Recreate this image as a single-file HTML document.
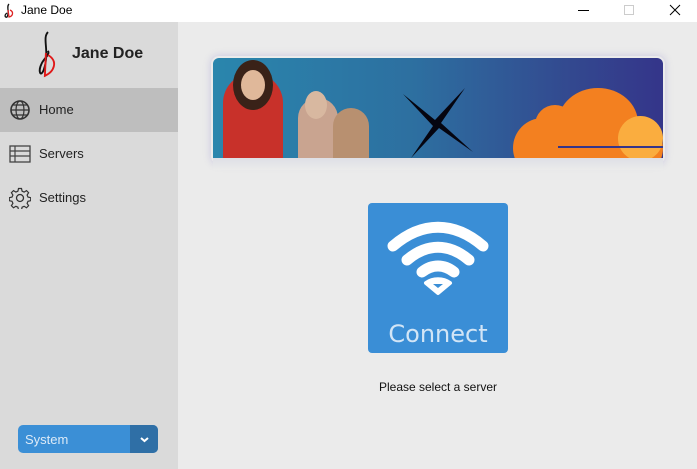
<!DOCTYPE html>
<html><head><style>
*{margin:0;padding:0;box-sizing:border-box}
body{width:697px;height:469px;overflow:hidden;background:#ebebeb;font-family:"Liberation Sans",sans-serif;position:relative}
.title{position:absolute;left:0;top:0;width:697px;height:22px;background:#fff;font-size:12px}
.side{position:absolute;left:0;top:22px;width:178px;height:447px;background:#dadada}
.item{position:absolute;left:0;width:178px;height:44px;font-size:13px;color:#222}
.item span{position:absolute;left:39px;top:14px}
.item svg{position:absolute;left:9px;top:11px}
</style></head><body>
<div class="title">
 <svg style="position:absolute;left:3px;top:3px" width="12" height="16" viewBox="0 0 12 16"><path d="M6 1 C3 4 7 9 4 14 C2 15 1 12 4 10" stroke="#111" fill="none" stroke-width="1.3"/><path d="M5 7 L6 14 C10 13 11 9 7 7" stroke="#d22" fill="none" stroke-width="1.3"/></svg>
 <span style="position:absolute;left:21px;top:3px;color:#000">Jane Doe</span>
 <div style="position:absolute;left:578px;top:10px;width:11px;height:1px;background:#000"></div>
 <div style="position:absolute;left:624px;top:5px;width:10px;height:10px;border:1px solid #ccc"></div>
 <svg style="position:absolute;left:669px;top:4px" width="12" height="12"><path d="M1 1L11 11M11 1L1 11" stroke="#000" stroke-width="1"/></svg>
</div>
<div class="side">
 <svg style="position:absolute;left:34px;top:8px" width="28" height="50" viewBox="0 0 24 48"><path d="M12 2 C6 8 14 20 8 38 C5 46 2 40 6 32 C9 26 14 24 12 20" stroke="#111" fill="none" stroke-width="1.8"/><path d="M10 22 L9 44 C18 40 22 30 12 24" stroke="#e01818" fill="none" stroke-width="1.8"/></svg>
 <span style="position:absolute;left:72px;top:23px;font-weight:bold;font-size:16px;color:#222">Jane Doe</span>
 <div class="item" style="top:66px;background:#bebebe"><svg width="22" height="22" viewBox="0 0 22 22"><circle cx="11" cy="11" r="9" fill="none" stroke="#333" stroke-width="1.6"/><ellipse cx="11" cy="11" rx="4" ry="9" fill="none" stroke="#333" stroke-width="1.2"/><path d="M2 11H20M4 6H18M4 16H18" stroke="#333" stroke-width="1.2"/></svg><span>Home</span></div>
 <div class="item" style="top:110px"><svg width="22" height="22" viewBox="0 0 22 22"><rect x="1" y="3" width="20" height="16" fill="none" stroke="#444" stroke-width="1.3"/><path d="M1 8H21M1 13H21M6 3V19" stroke="#444" stroke-width="1.2"/></svg><span>Servers</span></div>
 <div class="item" style="top:154px"><svg width="22" height="22" viewBox="0 0 22 22"><circle cx="11" cy="11" r="3.5" fill="none" stroke="#333" stroke-width="1.3"/><path d="M9.5 1.5h3l.6 2.7 2 .9 2.4-1.5 2.1 2.1-1.5 2.4.9 2 2.7.6v3l-2.7.6-.9 2 1.5 2.4-2.1 2.1-2.4-1.5-2 .9-.6 2.7h-3l-.6-2.7-2-.9-2.4 1.5-2.1-2.1 1.5-2.4-.9-2-2.7-.6v-3l2.7-.6.9-2-1.5-2.4 2.1-2.1 2.4 1.5 2-.9z" fill="none" stroke="#333" stroke-width="1.2"/></svg><span>Settings</span></div>
 <div style="position:absolute;left:18px;top:403px;width:140px;height:28px;border-radius:5px;background:#3b8fd6;overflow:hidden">
  <span style="position:absolute;left:7px;top:7px;font-size:13px;color:#dceaf7">System</span>
  <div style="position:absolute;left:112px;top:0;width:28px;height:28px;background:#2f6fa6"></div>
  <svg style="position:absolute;left:122px;top:12px" width="9" height="6"><path d="M1 1L4.5 4L8 1" stroke="#fff" stroke-width="2" fill="none"/></svg>
 </div>
</div>
<div style="position:absolute;left:211px;top:56px;width:454px;height:108px;border-radius:8px;box-shadow:0 0 8px rgba(120,110,200,.3)"></div>
<div style="position:absolute;left:213px;top:58px;width:450px;height:100px;border-radius:6px 6px 0 0;background:linear-gradient(90deg,#2a86ad,#2d6fa0 45%,#33488f 80%,#34358a);overflow:hidden">
 <div style="position:absolute;left:10px;top:15px;width:60px;height:90px;border-radius:30px 30px 0 0;background:#c8312a"></div>
 <div style="position:absolute;left:20px;top:2px;width:40px;height:50px;border-radius:50%;background:#3a2218"></div>
 <div style="position:absolute;left:28px;top:12px;width:24px;height:30px;border-radius:50%;background:#e0b89a"></div>
 <div style="position:absolute;left:85px;top:40px;width:40px;height:60px;border-radius:20px 20px 0 0;background:#c9a490"></div>
 <div style="position:absolute;left:92px;top:33px;width:22px;height:28px;border-radius:50%;background:#d8b8a0"></div>
 <div style="position:absolute;left:120px;top:50px;width:36px;height:50px;border-radius:18px 18px 0 0;background:#b89070"></div>
 <svg style="position:absolute;left:190px;top:30px" width="70" height="70" viewBox="0 0 70 70"><path d="M0 6L32 32L62 0L38 35L70 64L36 40L8 70L30 38Z" fill="#050510"/></svg>
 <div style="position:absolute;left:300px;top:60px;width:150px;height:60px;border-radius:30px;background:#f38020"></div>
 <div style="position:absolute;left:345px;top:30px;width:80px;height:70px;border-radius:50%;background:#f38020"></div>
 <div style="position:absolute;left:322px;top:47px;width:40px;height:40px;border-radius:50%;background:#f38020"></div>
 <div style="position:absolute;left:405px;top:58px;width:45px;height:45px;border-radius:50%;background:#faad3f"></div>
 <div style="position:absolute;left:345px;top:88px;width:105px;height:2px;background:#34358a"></div>
</div>
<div style="position:absolute;left:213px;top:158px;width:450px;height:12px;background:linear-gradient(#dedfe6,#ebebeb)"></div>
<div style="position:absolute;left:368px;top:203px;width:140px;height:150px;border-radius:4px;background:#3a8ed6">
 <svg style="position:absolute;left:18px;top:16px" width="104" height="80" viewBox="0 0 104 80"><g fill="none" stroke="#fff" stroke-width="11" stroke-linecap="round"><path d="M7 27 C36 2 68 2 97 27"/><path d="M21 41 C41 24 63 24 83 41"/><path d="M36 53 C46 45 58 45 68 53"/></g><path d="M40 64 L52 74 L64 64 C57 59 47 59 40 64Z" fill="#fff" stroke="#fff" stroke-width="4" stroke-linejoin="round"/><path d="M47 65 L52 69 L57 65Z" fill="#3a8ed6"/></svg>
 <span style="position:absolute;left:0;width:140px;text-align:center;top:117px;font-size:24px;color:#d2e5f6;font-family:'DejaVu Sans',sans-serif">Connect</span>
</div>
<div style="position:absolute;left:368px;width:140px;text-align:center;top:380px;font-size:12px;color:#111">Please select a server</div>
</body></html>
